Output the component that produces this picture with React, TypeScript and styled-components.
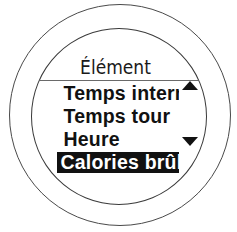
import React from "react";
import styled, { createGlobalStyle } from "styled-components";

const Global = createGlobalStyle`
  html, body { margin: 0; padding: 0; background: #fff; }
  body { width: 237px; height: 232px; overflow: hidden; }
`;

const Page = styled.div`
  width: 237px;
  height: 232px;
  padding: 4px 0 0 9px;
  box-sizing: border-box;
`;

const Bezel = styled.div`
  width: 222px;
  height: 222px;
  border-radius: 50%;
  border: 1.3px solid #4a4a4a;
  box-sizing: border-box;
  display: flex;
  align-items: center;
  justify-content: center;
`;

const Screen = styled.div`
  width: 176px;
  height: 177px;
  margin-top: 2px;
  margin-right: 3px;
  border-radius: 50%;
  border: 1.3px solid #3a3a3a;
  box-sizing: border-box;
  overflow: hidden;
  display: flex;
  flex-direction: column;
  font-family: "Liberation Sans", Arial, sans-serif;
  color: #111;
`;

const Title = styled.div`
  margin-top: 26px;
  padding-right: 6px;
  text-align: center;
  font-family: "DejaVu Sans Condensed", "DejaVu Sans", sans-serif;
  font-stretch: condensed;
  font-size: 19px;
  line-height: 24px;
  font-weight: 400;
  color: #1a1a1a;
`;

const Rule = styled.div`
  height: 1.5px;
  background: #6a6a6a;
  margin: 1px 0 0 4px;
`;

const Body = styled.div`
  display: flex;
  padding-left: 25px;
  margin-top: 1px;
`;

const List = styled.div`
  width: 122px;
  display: flex;
  flex-direction: column;
`;

const Item = styled.div<{ $selected?: boolean }>`
  font-size: 19.5px;
  font-weight: 700;
  letter-spacing: 0.2px;
  white-space: nowrap;
  overflow: hidden;
  padding-left: ${(p) => (p.$selected ? "4px" : "7px")};
  background: ${(p) => (p.$selected ? "#111" : "transparent")};
  color: ${(p) => (p.$selected ? "#fff" : "#111")};
  margin-top: ${(p) => (p.$selected ? "1px" : "0")};
  height: ${(p) => (p.$selected ? "21px" : "23px")};
  line-height: ${(p) => (p.$selected ? "21px" : "23px")};
`;

const Scroll = styled.div`
  display: flex;
  flex-direction: column;
  justify-content: space-between;
  width: 17px;
  height: 65px;
  margin-left: 3px;
  margin-top: -1px;
`;

const Arrow = ({ up }: { up?: boolean }) => (
  <svg width="16" height="9" viewBox="0 0 16 9">
    {up ? (
      <polygon points="8,0 16,9 0,9" fill="#111" />
    ) : (
      <polygon points="0,0 16,0 8,9" fill="#111" />
    )}
  </svg>
);

export default function App() {
  return (
    <>
      <Global />
      <Page>
        <Bezel>
          <Screen>
            <Title>Élément</Title>
            <Rule />
            <Body>
              <List>
                <Item>Temps intermédiaire</Item>
                <Item>Temps tour</Item>
                <Item>Heure</Item>
                <Item $selected>Calories brûlées</Item>
              </List>
              <Scroll>
                <Arrow up />
                <Arrow />
              </Scroll>
            </Body>
          </Screen>
        </Bezel>
      </Page>
    </>
  );
}
